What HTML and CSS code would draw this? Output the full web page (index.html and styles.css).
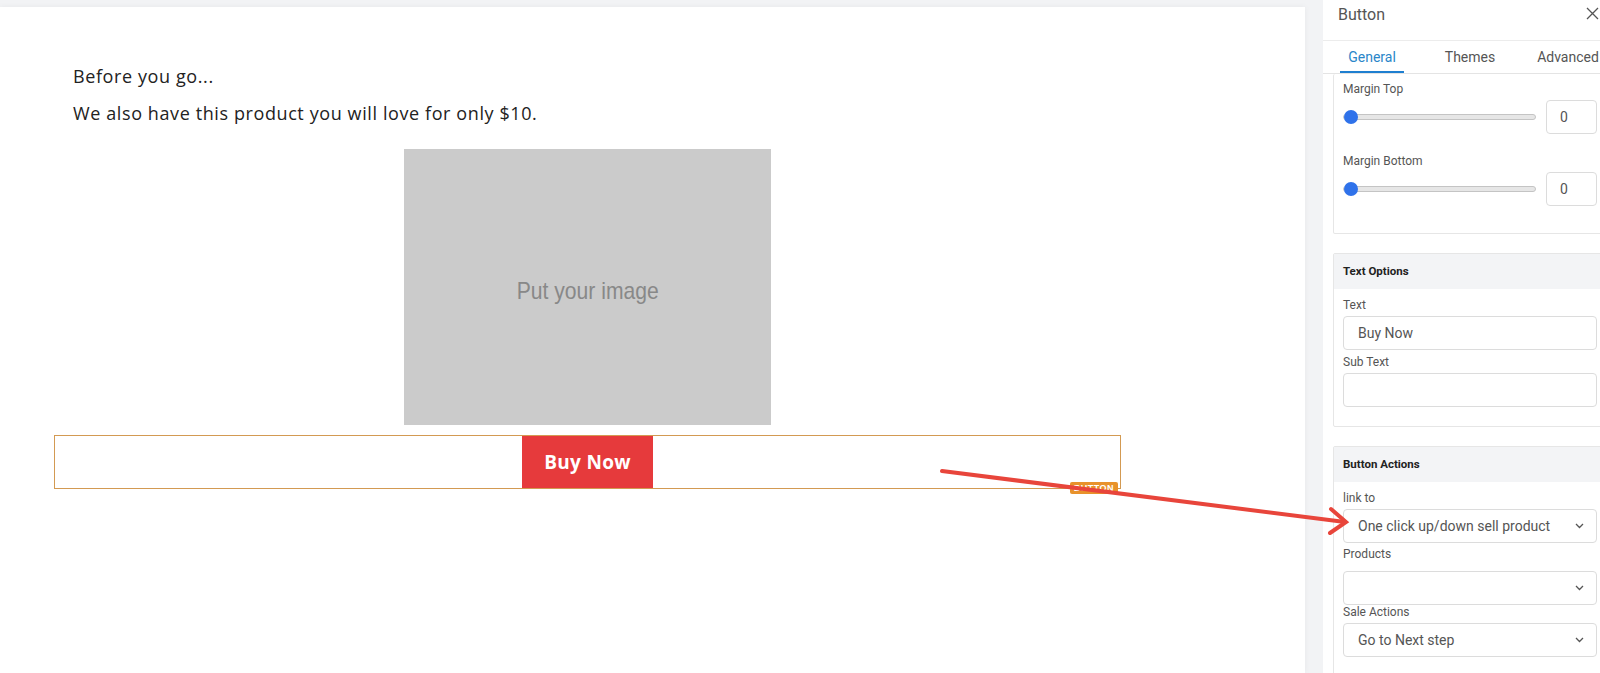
FILE: index.html
```html
<!DOCTYPE html>
<html>
<head>
    <title>Button settings</title>
    <link rel="stylesheet" href="styles.css">
</head>
<body>
    <!-- page canvas -->
    <div class="canvas">
        <div class="page">
            <p class="page-text">Before you go...</p>
            <p class="page-text">We also have this product you will love for only $10.</p>
            <div class="image-holder"><span class="image-hint">Put your image</span></div>
            <div class="button-row">
                <button class="buy-btn">Buy Now</button>
                <span class="element-tag">BUTTON</span>
            </div>
        </div>
    </div>

    <div class="side-gap"></div>

    <!-- settings sidebar -->
    <div class="sidebar">
        <div class="sidebar-header">
            <span class="sidebar-title">Button</span>
            <svg class="close-icon" width="13" height="13" viewBox="0 0 13 13">
                <path d="M1 1 L12 12 M12 1 L1 12" stroke="#555" stroke-width="1.3" fill="none"/>
            </svg>
        </div>
        <div class="tabs">
            <div class="tab"><span class="tab-label active">General</span></div>
            <div class="tab"><span class="tab-label">Themes</span></div>
            <div class="tab"><span class="tab-label">Advanced</span></div>
        </div>

        <div class="panel">
            <div class="card card-scrolled">
                <div class="card-body">
                    <div class="field-label">Margin Top</div>
                    <div class="slider-row">
                        <input type="range" class="slider" min="0" max="100" value="0">
                        <input type="text" class="num-input" value="0">
                    </div>
                    <div class="field-label">Margin Bottom</div>
                    <div class="slider-row">
                        <input type="range" class="slider" min="0" max="100" value="0">
                        <input type="text" class="num-input" value="0">
                    </div>
                </div>
            </div>

            <div class="card">
                <div class="card-header">Text Options</div>
                <div class="card-body">
                    <div class="field-label">Text</div>
                    <input type="text" class="text-input" value="Buy Now">
                    <div class="field-label">Sub Text</div>
                    <input type="text" class="text-input" value="">
                </div>
            </div>

            <div class="card">
                <div class="card-header">Button Actions</div>
                <div class="card-body">
                    <div class="field-label">link to</div>
                    <div class="select">
                        <span>One click up/down sell product</span>
                        <svg class="chevron" width="9" height="6" viewBox="0 0 9 6"><path d="M1 1 L4.5 4.5 L8 1" stroke="#555" stroke-width="1.3" fill="none"/></svg>
                    </div>
                    <div class="field-label">Products</div>
                    <div class="select select-spaced">
                        <span></span>
                        <svg class="chevron" width="9" height="6" viewBox="0 0 9 6"><path d="M1 1 L4.5 4.5 L8 1" stroke="#555" stroke-width="1.3" fill="none"/></svg>
                    </div>
                    <div class="field-label">Sale Actions</div>
                    <div class="select">
                        <span>Go to Next step</span>
                        <svg class="chevron" width="9" height="6" viewBox="0 0 9 6"><path d="M1 1 L4.5 4.5 L8 1" stroke="#555" stroke-width="1.3" fill="none"/></svg>
                    </div>
                </div>
            </div>
        </div>
    </div>

    <!-- red annotation arrow drawn over the screenshot -->
    <svg class="annotation" width="1600" height="673" viewBox="0 0 1600 673">
        <g stroke="#e8453b" stroke-width="4" stroke-linecap="round" fill="none">
            <path d="M942 471 L1345 522"/>
            <path d="M1331 509 L1346 522 L1330 533"/>
        </g>
    </svg>
</body>
</html>
```

FILE: styles.css
```css
/* base */
body {
    margin: 0;
    height: 100vh;
    display: flex;
    overflow: hidden;
    position: relative;
    background: #f2f3f5;
    font-family: Roboto, "Liberation Sans", sans-serif;
}

/* canvas */
.canvas {
    width: 1305px;
    flex-shrink: 0;
    margin-top: 7px;
    background: #fff;
    box-shadow: 0 0 6px rgba(0, 0, 0, 0.05);
}
.page {
    width: 1067px;
    margin-left: 54px;
    padding-top: 57px;
}
.page-text {
    margin: 0 0 13px;
    padding-left: 19px;
    font-family: "Open Sans", sans-serif;
    font-size: 18px;
    letter-spacing: 0.6px;
    line-height: 24px;
    color: #222;
}
.image-holder {
    width: 367px;
    height: 268px;
    padding-top: 8px;
    margin: 24px auto 10px;
    display: flex;
    align-items: center;
    justify-content: center;
    background: #cbcbcb;
}
.image-hint {
    display: inline-block;
    transform: scaleX(0.88);
    color: #888;
    font-family: "Liberation Sans", sans-serif;
    font-size: 24px;
}
.button-row {
    position: relative;
    display: flex;
    justify-content: center;
    border: 1px solid #d39a52;
}
.buy-btn {
    width: 131px;
    height: 52px;
    border: none;
    background: #e63a3c;
    color: #fff;
    font-family: "Open Sans", sans-serif;
    font-weight: 700;
    font-size: 19px;
    letter-spacing: 0.3px;
    cursor: pointer;
}
.element-tag {
    position: absolute;
    right: 2px;
    bottom: -6px;
    padding: 0 4px;
    height: 12px;
    line-height: 12px;
    border-radius: 2px;
    background: #e8922b;
    color: #fff;
    font-family: "Liberation Sans", sans-serif;
    font-size: 9px;
    font-weight: 700;
    letter-spacing: 0.5px;
}

.side-gap {
    width: 18px;
    flex-shrink: 0;
}

/* sidebar */
.sidebar {
    width: 294px;
    flex-shrink: 0;
    background: #fff;
}
.sidebar-header {
    height: 35px;
    padding: 5px 18px 0 15px;
    display: flex;
    justify-content: space-between;
    align-items: flex-start;
    border-bottom: 1px solid #ececec;
}
.sidebar-title {
    font-size: 16px;
    line-height: 20px;
    color: #555;
}
.close-icon {
    margin-top: 2px;
}
.tabs {
    display: flex;
    border-bottom: 1px solid #e4e4e4;
}
.tab {
    flex: 1;
    text-align: center;
}
.tab-label {
    display: inline-block;
    padding: 8px 8px 6px;
    line-height: 16px;
    font-size: 14px;
    color: #555;
    border-bottom: 2px solid transparent;
}
.tab-label.active {
    color: #2a86c9;
    border-bottom-color: #1e7fd0;
}

.panel {
    padding: 0 10px;
}
.card {
    border: 1px solid #e6e6e6;
    border-radius: 2px;
    margin-bottom: 19px;
}
.card-scrolled {
    border-top: none;
}
.card-scrolled .card-body {
    padding-top: 8px;
}
.card-header {
    height: 35px;
    line-height: 35px;
    padding: 0 9px;
    background: #f3f4f6;
    font-size: 11.5px;
    font-weight: 700;
    color: #222;
}
.card-body {
    padding: 9px 9px 19px;
}
.field-label {
    font-size: 12px;
    line-height: 14px;
    color: #555;
    margin-bottom: 4px;
}

/* sliders */
.slider-row {
    display: flex;
    align-items: center;
    gap: 10px;
    margin-bottom: 20px;
}
.slider-row:last-child {
    margin-bottom: 8px;
}
.slider {
    flex: 1;
    margin: 0;
    height: 14px;
    -webkit-appearance: none;
    appearance: none;
    background: transparent;
}
.slider::-webkit-slider-runnable-track {
    height: 6px;
    background: #e6e6e6;
    border: 1px solid #c4c4c4;
    border-radius: 4px;
}
.slider::-webkit-slider-thumb {
    -webkit-appearance: none;
    width: 14px;
    height: 14px;
    margin-top: -5px;
    border-radius: 50%;
    background: #2f72ea;
    border: none;
}
.num-input {
    width: 51px;
    height: 34px;
    box-sizing: border-box;
    padding: 0 13px;
    border: 1px solid #dcdcdc;
    border-radius: 4px;
    font-family: Roboto, sans-serif;
    font-size: 14px;
    color: #555;
}

/* text fields */
.text-input {
    display: block;
    width: 100%;
    height: 34px;
    box-sizing: border-box;
    margin: 0 0 5px;
    padding: 0 14px;
    border: 1px solid #dcdcdc;
    border-radius: 4px;
    font-family: Roboto, sans-serif;
    font-size: 14px;
    color: #555;
}
.text-input:last-child {
    margin-bottom: 0;
}
.select {
    height: 34px;
    box-sizing: border-box;
    margin-bottom: 4px;
    padding: 0 12px 0 14px;
    display: flex;
    align-items: center;
    justify-content: space-between;
    border: 1px solid #dcdcdc;
    border-radius: 4px;
    font-size: 14px;
    color: #555;
}
.select-spaced {
    margin-top: 10px;
    margin-bottom: 0;
}

.annotation {
    position: absolute;
    left: 0;
    top: 0;
    pointer-events: none;
}
```
